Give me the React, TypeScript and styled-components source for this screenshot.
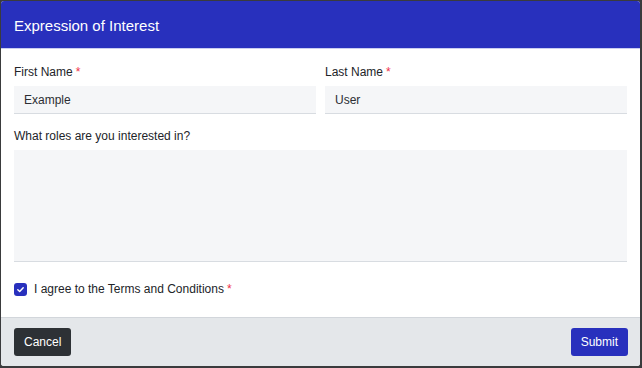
import React from "react";
import styled, { createGlobalStyle } from "styled-components";

const Global = createGlobalStyle`
  html, body { margin: 0; padding: 0; background: #3a3b3d; }
  body { font-family: "Liberation Sans", Arial, sans-serif; }
  * { box-sizing: border-box; }
`;

const Backdrop = styled.div`
  width: 642px;
  height: 368px;
  padding: 1px 2px 2px 1px;
  background: #3a3b3d;
`;

const Modal = styled.div`
  display: flex;
  flex-direction: column;
  height: 100%;
  background: #ffffff;
  border-radius: 3px;
  overflow: hidden;
`;

const Header = styled.div`
  height: 48px;
  background: #2830bd;
  color: #fff;
  display: flex;
  align-items: center;
  padding: 2px 13px 0;
  font-size: 15px;
  border-bottom: 1px solid #c9cdf0;
`;

const Body = styled.div`
  flex: 1;
  padding: 14px 13px 0 13px;
  display: flex;
  flex-direction: column;
`;

const Row = styled.div`
  display: grid;
  grid-template-columns: 1fr 1fr;
  gap: 9px;
`;

const Field = styled.div<{ $gap?: number }>`
  display: flex;
  flex-direction: column;
  margin-top: ${(p) => p.$gap ?? 0}px;
`;

const Label = styled.label`
  font-size: 12px;
  color: #222429;
  line-height: 16px;
  padding-top: 1px;
  margin-bottom: 6px;
`;

const Req = styled.span`
  color: #ef3049;
  margin-left: 3px;
`;

const Input = styled.div`
  height: 28px;
  background: #f5f6f8;
  border-bottom: 1px solid #d8dce1;
  font-size: 12px;
  color: #2c2e33;
  display: flex;
  align-items: center;
  padding: 0 10px;
`;

const TextArea = styled.div`
  height: 112px;
  background: #f5f6f8;
  border-bottom: 1px solid #d8dce1;
`;

const CheckRow = styled.div`
  display: flex;
  align-items: center;
  gap: 7px;
  margin-top: 20px;
  font-size: 12px;
  color: #222429;
`;

const Box = styled.span`
  width: 13px;
  height: 13px;
  border-radius: 3px;
  background: #2830bd;
  display: inline-flex;
  align-items: center;
  justify-content: center;
`;

const Footer = styled.div`
  height: 49px;
  background: #e4e7ea;
  border-top: 1px solid #d2d6db;
  display: flex;
  align-items: center;
  justify-content: space-between;
  padding: 0 12px 0 13px;
`;

const Button = styled.button<{ $variant: "dark" | "primary" }>`
  height: 28px;
  border: none;
  border-radius: 3px;
  padding: 0 10px;
  font-family: inherit;
  font-size: 12px;
  color: #fff;
  background: ${(p) => (p.$variant === "dark" ? "#2d3135" : "#2830bd")};
`;

export default function App() {
  return (
    <>
      <Global />
      <Backdrop>
        <Modal>
          <Header>Expression of Interest</Header>
          <Body>
            <Row>
              <Field>
                <Label>
                  First Name<Req>*</Req>
                </Label>
                <Input>Example</Input>
              </Field>
              <Field>
                <Label>
                  Last Name<Req>*</Req>
                </Label>
                <Input>User</Input>
              </Field>
            </Row>
            <Field $gap={13}>
              <Label>What roles are you interested in?</Label>
              <TextArea />
            </Field>
            <CheckRow>
              <Box>
                <svg width="9" height="9" viewBox="0 0 10 10">
                  <path d="M2 5.2 L4.1 7.2 L8 3" stroke="#fff" strokeWidth="1.6" fill="none" strokeLinecap="round" strokeLinejoin="round" />
                </svg>
              </Box>
              <span>
                I agree to the Terms and Conditions<Req>*</Req>
              </span>
            </CheckRow>
          </Body>
          <Footer>
            <Button $variant="dark">Cancel</Button>
            <Button $variant="primary">Submit</Button>
          </Footer>
        </Modal>
      </Backdrop>
    </>
  );
}
